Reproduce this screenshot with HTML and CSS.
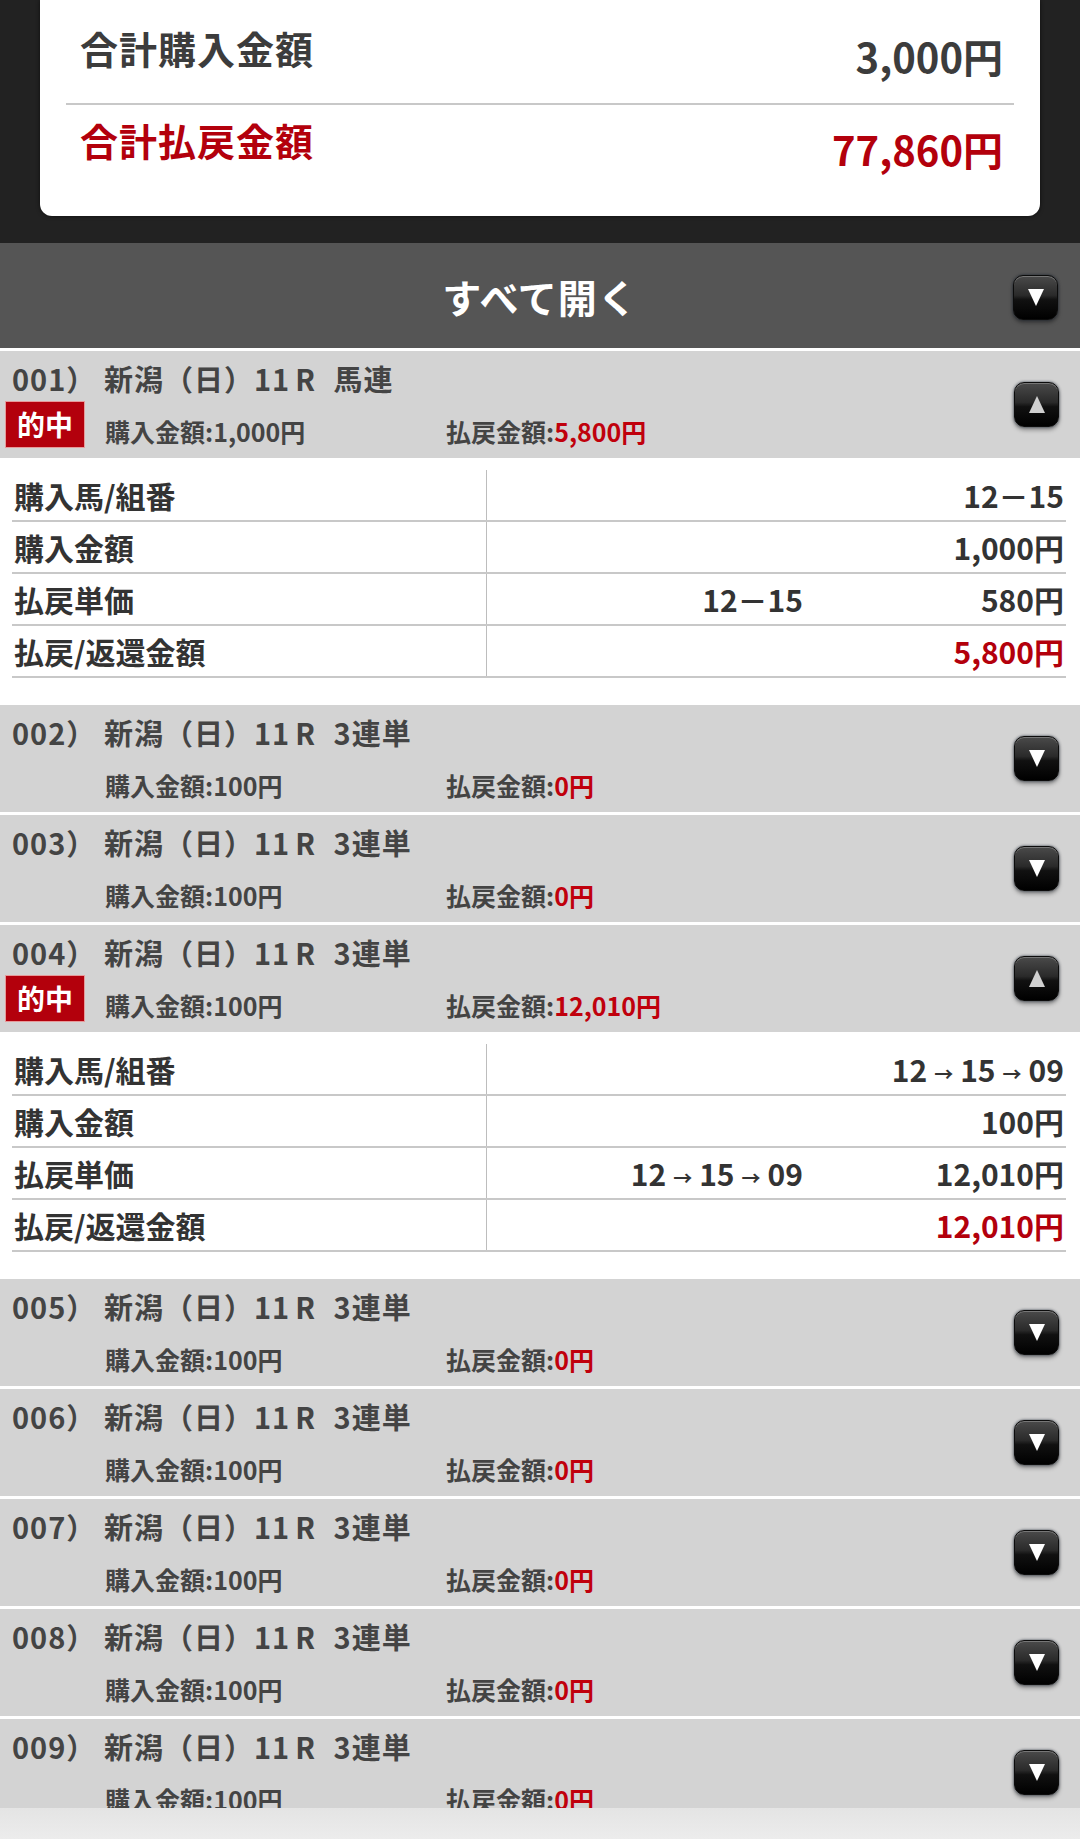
FILE: index.html
```html
<!DOCTYPE html>
<html lang="ja">
  <head>
    <meta charset="UTF-8" />
    <meta name="viewport" content="width=device-width, initial-scale=1.0" />
    <title>投票内容照会</title>
    <link rel="stylesheet" href="styles.css">
  </head>
  <body>
    <div class="summary">
      <div class="card">
        <div class="total-row">
          <span class="total-label">合計購入金額</span>
          <span class="total-value">3,000円</span>
        </div>
        <div class="total-row payout">
          <span class="total-label">合計払戻金額</span>
          <span class="total-value">77,860円</span>
        </div>
      </div>
    </div>

    <div class="open-all">
      <span class="open-all-text">すべて開く</span>
      <span class="toggle down"></span>
    </div>

    <div class="tickets">
      <div class="ticket-head">
        <div class="ticket-info">
          <div class="ticket-title">001） 新潟（日）<span class="race">11</span>R <span class="kind">馬連</span></div>
          <div class="ticket-sub">
            <span class="hit">的中</span>
            <span class="bet">購入金額:1,000円</span>
            <span class="pay">払戻金額:<em>5,800円</em></span>
          </div>
        </div>
        <span class="toggle up"></span>
      </div>
      <table class="detail">
        <tr>
          <td class="label">購入馬/組番</td>
          <td class="mid"></td>
          <td class="value">12－15</td>
        </tr>
        <tr>
          <td class="label">購入金額</td>
          <td class="mid"></td>
          <td class="value">1,000円</td>
        </tr>
        <tr>
          <td class="label">払戻単価</td>
          <td class="mid">12－15</td>
          <td class="value">580円</td>
        </tr>
        <tr>
          <td class="label">払戻/返還金額</td>
          <td class="mid"></td>
          <td class="value red">5,800円</td>
        </tr>
      </table>

      <div class="ticket-head">
        <div class="ticket-info">
          <div class="ticket-title">002） 新潟（日）<span class="race">11</span>R <span class="kind">3連単</span></div>
          <div class="ticket-sub">
            <span class="hit-slot"></span>
            <span class="bet">購入金額:100円</span>
            <span class="pay">払戻金額:<em>0円</em></span>
          </div>
        </div>
        <span class="toggle down"></span>
      </div>

      <div class="ticket-head">
        <div class="ticket-info">
          <div class="ticket-title">003） 新潟（日）<span class="race">11</span>R <span class="kind">3連単</span></div>
          <div class="ticket-sub">
            <span class="hit-slot"></span>
            <span class="bet">購入金額:100円</span>
            <span class="pay">払戻金額:<em>0円</em></span>
          </div>
        </div>
        <span class="toggle down"></span>
      </div>

      <div class="ticket-head">
        <div class="ticket-info">
          <div class="ticket-title">004） 新潟（日）<span class="race">11</span>R <span class="kind">3連単</span></div>
          <div class="ticket-sub">
            <span class="hit">的中</span>
            <span class="bet">購入金額:100円</span>
            <span class="pay">払戻金額:<em>12,010円</em></span>
          </div>
        </div>
        <span class="toggle up"></span>
      </div>
      <table class="detail">
        <tr>
          <td class="label">購入馬/組番</td>
          <td class="mid"></td>
          <td class="value">12<span class="arr">→</span>15<span class="arr">→</span>09</td>
        </tr>
        <tr>
          <td class="label">購入金額</td>
          <td class="mid"></td>
          <td class="value">100円</td>
        </tr>
        <tr>
          <td class="label">払戻単価</td>
          <td class="mid">12<span class="arr">→</span>15<span class="arr">→</span>09</td>
          <td class="value">12,010円</td>
        </tr>
        <tr>
          <td class="label">払戻/返還金額</td>
          <td class="mid"></td>
          <td class="value red">12,010円</td>
        </tr>
      </table>

      <div class="ticket-head">
        <div class="ticket-info">
          <div class="ticket-title">005） 新潟（日）<span class="race">11</span>R <span class="kind">3連単</span></div>
          <div class="ticket-sub">
            <span class="hit-slot"></span>
            <span class="bet">購入金額:100円</span>
            <span class="pay">払戻金額:<em>0円</em></span>
          </div>
        </div>
        <span class="toggle down"></span>
      </div>

      <div class="ticket-head">
        <div class="ticket-info">
          <div class="ticket-title">006） 新潟（日）<span class="race">11</span>R <span class="kind">3連単</span></div>
          <div class="ticket-sub">
            <span class="hit-slot"></span>
            <span class="bet">購入金額:100円</span>
            <span class="pay">払戻金額:<em>0円</em></span>
          </div>
        </div>
        <span class="toggle down"></span>
      </div>

      <div class="ticket-head">
        <div class="ticket-info">
          <div class="ticket-title">007） 新潟（日）<span class="race">11</span>R <span class="kind">3連単</span></div>
          <div class="ticket-sub">
            <span class="hit-slot"></span>
            <span class="bet">購入金額:100円</span>
            <span class="pay">払戻金額:<em>0円</em></span>
          </div>
        </div>
        <span class="toggle down"></span>
      </div>

      <div class="ticket-head">
        <div class="ticket-info">
          <div class="ticket-title">008） 新潟（日）<span class="race">11</span>R <span class="kind">3連単</span></div>
          <div class="ticket-sub">
            <span class="hit-slot"></span>
            <span class="bet">購入金額:100円</span>
            <span class="pay">払戻金額:<em>0円</em></span>
          </div>
        </div>
        <span class="toggle down"></span>
      </div>

      <div class="ticket-head">
        <div class="ticket-info">
          <div class="ticket-title">009） 新潟（日）<span class="race">11</span>R <span class="kind">3連単</span></div>
          <div class="ticket-sub">
            <span class="hit-slot"></span>
            <span class="bet">購入金額:100円</span>
            <span class="pay">払戻金額:<em>0円</em></span>
          </div>
        </div>
        <span class="toggle down"></span>
      </div>
    </div>

    <footer class="bottom-bar"></footer>
  </body>
</html>
```

FILE: styles.css
```css
body {
  margin: 0;
  font-family: "Noto Sans CJK JP", "Noto Sans", sans-serif;
  font-weight: bold;
  background-color: #ffffff;
  color: #444;
}

.summary {
  background-color: #222;
  padding: 0 40px 27px;
}

.card {
  background-color: #fff;
  border-radius: 0 0 12px 12px;
  box-shadow: 0 0 4px rgba(0, 0, 0, 0.6);
  padding: 0 26px;
  height: 216px;
  box-sizing: border-box;
}

.total-row {
  display: flex;
  justify-content: space-between;
  align-items: flex-start;
  height: 103px;
  border-bottom: 2px solid #c8c8c8;
  padding: 0 11px 0 14px;
  color: #3c3c3c;
}

.total-label {
  font-size: 38px;
  line-height: 38px;
  letter-spacing: 1px;
  margin-top: 29px;
}

.total-value {
  font-size: 40px;
  line-height: 40px;
  margin-top: 36px;
}

.total-row.payout {
  border-bottom: none;
  color: #b3000c;
  height: auto;
}

.total-row.payout .total-label {
  margin-top: 16px;
}

.total-row.payout .total-value {
  margin-top: 24px;
}

.open-all {
  background-color: #555;
  height: 105px;
  display: flex;
  align-items: center;
  justify-content: center;
  position: relative;
  border-bottom: 3px solid #fff;
}

.open-all-text {
  color: #fff;
  font-size: 39px;
  letter-spacing: 1px;
}

.open-all .toggle {
  position: absolute;
  right: 22px;
  top: 32px;
}

.toggle {
  width: 45px;
  height: 45px;
  box-sizing: border-box;
  border-radius: 10px;
  border: 1px solid #0c0c0c;
  background: linear-gradient(#4a4a4a 0%, #2a2a2a 45%, #111 55%, #000 100%);
  box-shadow: inset 0 1px 0 rgba(255, 255, 255, 0.25), 0 0 3px rgba(20, 30, 45, 0.8), 0 3px 4px rgba(0, 0, 0, 0.35);
  display: flex;
  align-items: center;
  justify-content: center;
  flex-shrink: 0;
}

.toggle::after {
  content: "";
  width: 0;
  height: 0;
  border-left: 8px solid transparent;
  border-right: 8px solid transparent;
}

.toggle.down::after {
  border-top: 17px solid #fff;
}

.toggle.up::after {
  border-bottom: 17px solid #d0d0d0;
}

.ticket-head {
  background-color: #d3d3d3;
  height: 107px;
  display: flex;
  align-items: center;
  justify-content: space-between;
  padding-right: 21px;
  margin-bottom: 3px;
}

.ticket-info {
  align-self: flex-start;
}

.ticket-title {
  font-size: 29px;
  line-height: 30px;
  letter-spacing: 1px;
  margin-top: 12px;
  padding-left: 12px;
  white-space: nowrap;
}

.race {
  margin-right: 5px;
}

.kind {
  margin-left: 10px;
}

.ticket-sub {
  display: flex;
  align-items: flex-end;
  height: 47px;
  margin-top: 8px;
  font-size: 25px;
  line-height: 25px;
}

.hit,
.hit-slot {
  width: 80px;
  height: 47px;
  box-sizing: border-box;
  margin-left: 5px;
  margin-right: 20px;
}

.hit {
  background-color: #b3000c;
  border: 1px solid #e69a9a;
  color: #fff;
  font-size: 28px;
  display: flex;
  align-items: center;
  justify-content: center;
}

.bet,
.pay {
  margin-bottom: 4px;
}

.bet {
  width: 341px;
}

.pay em {
  font-style: normal;
  color: #c0000c;
}

.detail {
  border-collapse: collapse;
  margin: 12px 14px 27px 12px;
  width: calc(100% - 26px);
  font-size: 30px;
  color: #333;
}

.detail td {
  height: 50px;
  padding: 0;
  border-bottom: 2px solid #c8c8c8;
  white-space: nowrap;
}

.detail .label {
  width: 472px;
  padding-left: 2px;
}

.detail .mid {
  width: 316px;
  text-align: right;
  padding-right: 17px;
  border-left: 1px solid #bdbdbd;
}

.detail .value {
  text-align: right;
  padding-right: 2px;
}

.detail .red {
  color: #b3000c;
}

.arr {
  font-size: 19px;
  margin: 0 7px;
}

.bottom-bar {
  position: fixed;
  left: 0;
  right: 0;
  bottom: 0;
  height: 31px;
  background: linear-gradient(#e4e4e4, #ececec);
}
```
